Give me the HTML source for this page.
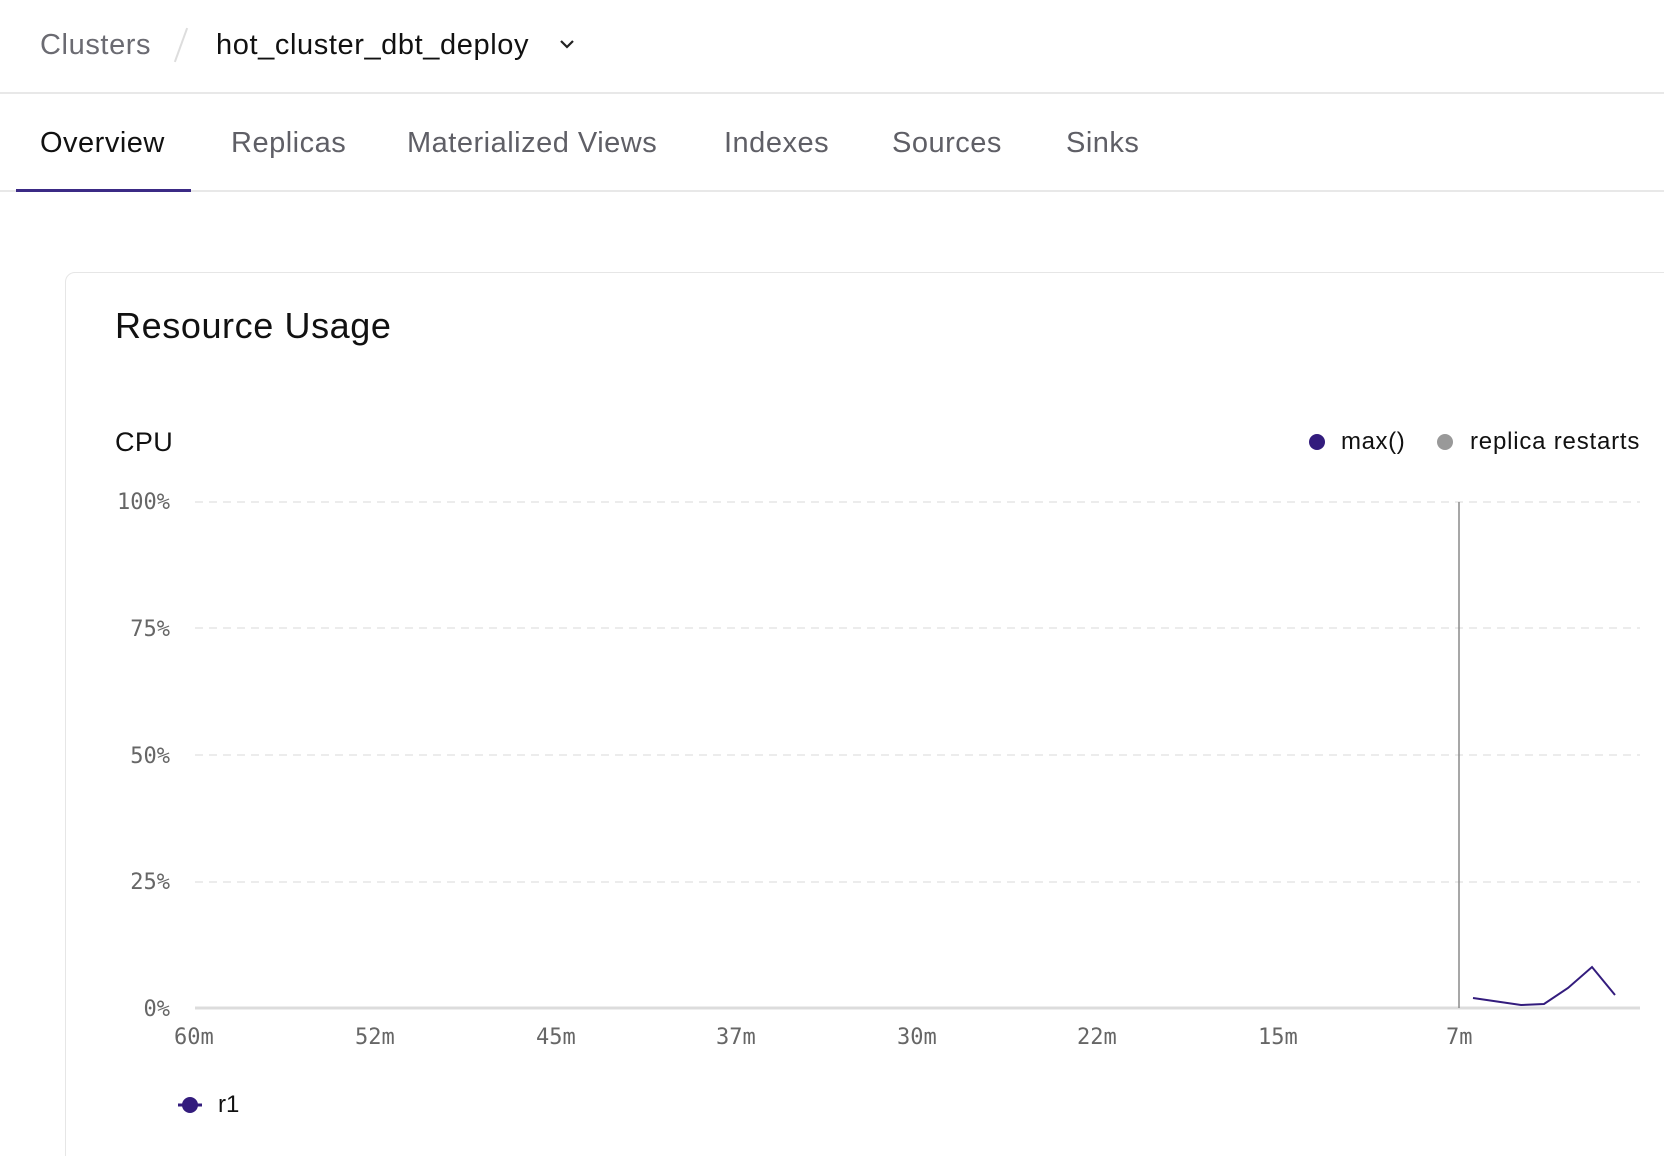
<!DOCTYPE html>
<html style="overflow:hidden;width:1664px;height:1156px"><head><meta charset="utf-8"><style>
*{margin:0;padding:0;box-sizing:border-box}
body{width:1664px;height:1156px;overflow:hidden;background:#fff;font-family:"Liberation Sans",sans-serif;position:relative;color:#111}
.a{position:absolute;white-space:nowrap;line-height:1}
.tab{font-size:29px;letter-spacing:0.5px;color:#5f5f66;top:129px}
.mono{font-family:"DejaVu Sans Mono","Liberation Mono",monospace;font-size:22px;color:#666}
</style></head><body>
<div class="a" style="left:40px;top:31px;font-size:29px;letter-spacing:0.6px;color:#6b6b72">Clusters</div>
<div class="a" style="left:180px;top:27px;width:2px;height:36px;background:#ddd;transform:rotate(20deg)"></div>
<div class="a" style="left:216px;top:31px;font-size:29px;letter-spacing:0.6px;color:#111">hot_cluster_dbt_deploy</div>
<svg class="a" style="left:558px;top:37px" width="18" height="14" viewBox="0 0 18 14"><path d="M3 4l6 6 6-6" fill="none" stroke="#222" stroke-width="2.2"/></svg>
<div class="a" style="left:0;top:92px;width:1664px;height:2px;background:#e8e8e8"></div>
<div class="a tab" style="left:40px;color:#111">Overview</div>
<div class="a tab" style="left:231px">Replicas</div>
<div class="a tab" style="left:407px">Materialized Views</div>
<div class="a tab" style="left:724px">Indexes</div>
<div class="a tab" style="left:892px">Sources</div>
<div class="a tab" style="left:1066px">Sinks</div>
<div class="a" style="left:0;top:190px;width:1664px;height:2px;background:#e8e8e8"></div>
<div class="a" style="left:16px;top:189px;width:175px;height:3px;background:#3b2a85"></div>
<div class="a" style="left:65px;top:272px;width:1640px;height:900px;border:1.5px solid #e6e6e6;border-radius:10px"></div>
<div class="a" style="left:115px;top:308px;font-size:36px;letter-spacing:0.6px;font-weight:500;color:#111">Resource Usage</div>
<div class="a" style="left:115px;top:429px;font-size:27px;letter-spacing:0.4px;color:#111">CPU</div>
<div class="a" style="left:1309px;top:434px;width:16px;height:16px;border-radius:50%;background:#331c7d"></div>
<div class="a" style="left:1341px;top:430px;font-size:24px;letter-spacing:0.6px;color:#111">max()</div>
<div class="a" style="left:1437px;top:434px;width:16px;height:16px;border-radius:50%;background:#999"></div>
<div class="a" style="left:1470px;top:430px;font-size:24px;letter-spacing:0.8px;color:#111">replica restarts</div>
<div class="a mono" style="left:100px;width:70px;text-align:right;top:492px">100%</div>
<div class="a mono" style="left:100px;width:70px;text-align:right;top:619px">75%</div>
<div class="a mono" style="left:100px;width:70px;text-align:right;top:746px">50%</div>
<div class="a mono" style="left:100px;width:70px;text-align:right;top:872px">25%</div>
<div class="a mono" style="left:100px;width:70px;text-align:right;top:999px">0%</div>
<svg class="a" style="left:0;top:0" width="1664" height="1156">
<g stroke="#e6e6e6" stroke-width="1.5" stroke-dasharray="8 6">
<line x1="195" y1="502" x2="1640" y2="502"/><line x1="195" y1="628" x2="1640" y2="628"/><line x1="195" y1="755" x2="1640" y2="755"/><line x1="195" y1="882" x2="1640" y2="882"/></g>
<line x1="195" y1="1008" x2="1640" y2="1008" stroke="#dcdcdc" stroke-width="3"/>
<line x1="1459" y1="502" x2="1459" y2="1008" stroke="#8a8a8a" stroke-width="1.5"/>
<polyline points="1473,998 1521,1005 1544,1004 1568,988 1592,967 1615,995" fill="none" stroke="#331c7d" stroke-width="2"/>
<line x1="178" y1="1105" x2="202" y2="1105" stroke="#331c7d" stroke-width="3"/>
<circle cx="190" cy="1105" r="8" fill="#331c7d"/>
</svg>
<div class="a mono" style="left:174px;top:1027px">60m</div>
<div class="a mono" style="left:355px;top:1027px">52m</div>
<div class="a mono" style="left:536px;top:1027px">45m</div>
<div class="a mono" style="left:716px;top:1027px">37m</div>
<div class="a mono" style="left:897px;top:1027px">30m</div>
<div class="a mono" style="left:1077px;top:1027px">22m</div>
<div class="a mono" style="left:1258px;top:1027px">15m</div>
<div class="a mono" style="left:1446px;top:1027px">7m</div>
<div class="a" style="left:218px;top:1093px;font-size:24px;color:#111">r1</div>
</body></html>
